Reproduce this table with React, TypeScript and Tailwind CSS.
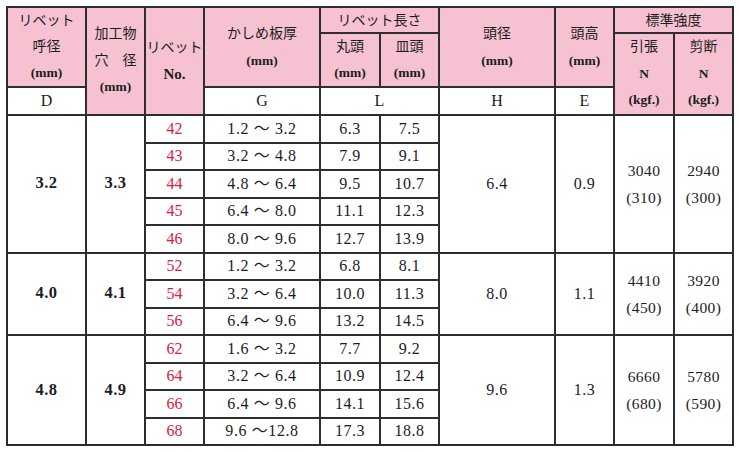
import React from 'react'

// Rivet spec table (scanned catalogue page)

const PINK = 'bg-[#f6c2d2]'
const WHITE = 'bg-white'

function Cell({ className, children }: { className: string; children?: React.ReactNode }) {
  return (
    <div className={`flex flex-col items-center justify-center text-center ${className}`}>{children}</div>
  )
}

function Mm() {
  return <span className="font-bold text-[13.5px]">(mm)</span>
}

const rows = [
  { row: 'row-start-4', no: '42', g: '1.2 ～ 3.2', a: '6.3', b: '7.5' },
  { row: 'row-start-5', no: '43', g: '3.2 ～ 4.8', a: '7.9', b: '9.1' },
  { row: 'row-start-6', no: '44', g: '4.8 ～ 6.4', a: '9.5', b: '10.7' },
  { row: 'row-start-7', no: '45', g: '6.4 ～ 8.0', a: '11.1', b: '12.3' },
  { row: 'row-start-8', no: '46', g: '8.0 ～ 9.6', a: '12.7', b: '13.9' },
  { row: 'row-start-9', no: '52', g: '1.2 ～ 3.2', a: '6.8', b: '8.1' },
  { row: 'row-start-10', no: '54', g: '3.2 ～ 6.4', a: '10.0', b: '11.3' },
  { row: 'row-start-11', no: '56', g: '6.4 ～ 9.6', a: '13.2', b: '14.5' },
  { row: 'row-start-12', no: '62', g: '1.6 ～ 3.2', a: '7.7', b: '9.2' },
  { row: 'row-start-13', no: '64', g: '3.2 ～ 6.4', a: '10.9', b: '12.4' },
  { row: 'row-start-14', no: '66', g: '6.4 ～ 9.6', a: '14.1', b: '15.6' },
  { row: 'row-start-15', no: '68', g: '9.6 ～12.8', a: '17.3', b: '18.8' },
]

const groups = [
  { rows: 'row-start-4 row-span-5', d: '3.2', hole: '3.3', h: '6.4', e: '0.9', t: ['3040', '(310)'], s: ['2940', '(300)'] },
  { rows: 'row-start-9 row-span-3', d: '4.0', hole: '4.1', h: '8.0', e: '1.1', t: ['4410', '(450)'], s: ['3920', '(400)'] },
  { rows: 'row-start-12 row-span-4', d: '4.8', hole: '4.9', h: '9.6', e: '1.3', t: ['6660', '(680)'], s: ['5780', '(590)'] },
]

export default function App() {
  return (
    <div className="w-[739px] h-[452px] bg-white pl-[6px] pt-[6px] font-['Liberation_Serif','Noto_Sans_CJK_JP',serif] text-[#1c1c1c]">
      <div className="grid w-[728px] gap-[2px] bg-[#2e2e2e] p-[2px] grid-cols-[77px_57px_57px_114px_58px_57px_114px_57px_58px_57px] grid-rows-[24px_52px_26px_repeat(12,25.5px)]">
        {/* header */}
        <Cell className={`${PINK} col-start-1 row-start-1 row-span-2 leading-[26px] text-[14px]`}>
          <span>リベット</span>
          <span>呼径</span>
          <Mm />
        </Cell>
        <Cell className={`${WHITE} col-start-1 row-start-3 text-[16px]`}>D</Cell>
        <Cell className={`${PINK} col-start-2 row-start-1 row-span-3 leading-[26.5px] text-[14px]`}>
          <span>加工物</span>
          <span className="whitespace-pre">穴　径</span>
          <Mm />
        </Cell>
        <Cell className={`${PINK} col-start-3 row-start-1 row-span-3 leading-[26px] text-[14px]`}>
          <span>リベット</span>
          <span className="font-bold text-[15px]">No.</span>
        </Cell>
        <Cell className={`${PINK} col-start-4 row-start-1 row-span-2 leading-[27px] text-[14px]`}>
          <span>かしめ板厚</span>
          <Mm />
        </Cell>
        <Cell className={`${WHITE} col-start-4 row-start-3 text-[16px]`}>G</Cell>
        <Cell className={`${PINK} col-start-5 col-span-2 row-start-1 text-[14px]`}>リベット長さ</Cell>
        <Cell className={`${PINK} col-start-5 row-start-2 leading-[26px] text-[14px]`}>
          <span>丸頭</span>
          <Mm />
        </Cell>
        <Cell className={`${PINK} col-start-6 row-start-2 leading-[26px] text-[14px]`}>
          <span>皿頭</span>
          <Mm />
        </Cell>
        <Cell className={`${WHITE} col-start-5 col-span-2 row-start-3 text-[16px]`}>L</Cell>
        <Cell className={`${PINK} col-start-7 row-start-1 row-span-2 leading-[27px] text-[14px]`}>
          <span>頭径</span>
          <Mm />
        </Cell>
        <Cell className={`${WHITE} col-start-7 row-start-3 text-[16px]`}>H</Cell>
        <Cell className={`${PINK} col-start-8 row-start-1 row-span-2 leading-[27px] text-[14px]`}>
          <span>頭高</span>
          <Mm />
        </Cell>
        <Cell className={`${WHITE} col-start-8 row-start-3 text-[16px]`}>E</Cell>
        <Cell className={`${PINK} col-start-9 col-span-2 row-start-1 text-[14px]`}>標準強度</Cell>
        <Cell className={`${PINK} col-start-9 row-start-2 row-span-2 leading-[26.5px] text-[13.5px]`}>
          <span className="text-[14px]">引張</span>
          <span className="font-bold">N</span>
          <span className="font-bold">(kgf.)</span>
        </Cell>
        <Cell className={`${PINK} col-start-10 row-start-2 row-span-2 leading-[26.5px] text-[13.5px]`}>
          <span className="text-[14px]">剪断</span>
          <span className="font-bold">N</span>
          <span className="font-bold">(kgf.)</span>
        </Cell>

        {/* grouped columns */}
        {groups.map((g) => (
          <React.Fragment key={g.d}>
            <Cell className={`${WHITE} col-start-1 ${g.rows} font-bold text-[16.5px] tracking-[0.5px]`}>{g.d}</Cell>
            <Cell className={`${WHITE} col-start-2 ${g.rows} font-bold text-[16.5px] tracking-[0.5px]`}>{g.hole}</Cell>
            <Cell className={`${WHITE} col-start-7 ${g.rows} text-[16px] tracking-[0.5px]`}>{g.h}</Cell>
            <Cell className={`${WHITE} col-start-8 ${g.rows} text-[16px] tracking-[0.5px]`}>{g.e}</Cell>
            <Cell className={`${WHITE} col-start-9 ${g.rows} leading-[27px] text-[15.5px] tracking-[0.4px]`}>
              <span>{g.t[0]}</span>
              <span>{g.t[1]}</span>
            </Cell>
            <Cell className={`${WHITE} col-start-10 ${g.rows} leading-[27px] text-[15.5px] tracking-[0.4px]`}>
              <span>{g.s[0]}</span>
              <span>{g.s[1]}</span>
            </Cell>
          </React.Fragment>
        ))}

        {/* per-rivet rows */}
        {rows.map((r) => (
          <React.Fragment key={r.no}>
            <Cell className={`${WHITE} col-start-3 ${r.row} text-[16px] text-[#d8213f]`}>{r.no}</Cell>
            <Cell className={`${WHITE} col-start-4 ${r.row} text-[16px] tracking-[0.6px] whitespace-pre`}>{r.g}</Cell>
            <Cell className={`${WHITE} col-start-5 ${r.row} text-[16px] tracking-[0.5px]`}>{r.a}</Cell>
            <Cell className={`${WHITE} col-start-6 ${r.row} text-[16px] tracking-[0.5px]`}>{r.b}</Cell>
          </React.Fragment>
        ))}
      </div>
    </div>
  )
}
